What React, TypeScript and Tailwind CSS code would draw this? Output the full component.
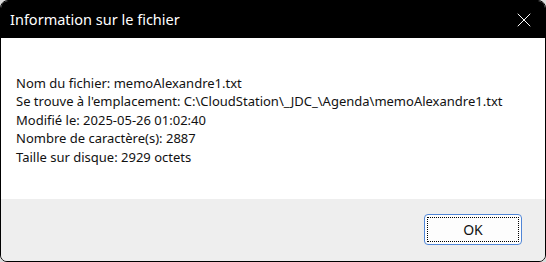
import { X } from "lucide-react";

const lines = [
  "Nom du fichier: memoAlexandre1.txt",
  "Se trouve à l'emplacement: C:\\CloudStation\\_JDC_\\Agenda\\memoAlexandre1.txt",
  "Modifié le: 2025-05-26 01:02:40",
  "Nombre de caractère(s): 2887",
  "Taille sur disque: 2929 octets",
];

export default function App() {
  return (
    <div className="h-[262px] w-[546px] bg-[#dcdcdc] font-['Noto_Sans',sans-serif]">
      <div className="flex h-full flex-col overflow-hidden rounded-t-[8px] rounded-b-[7px] border border-black">
        <div className="flex h-[37px] shrink-0 items-center justify-between bg-black pl-[9px] pr-[9px]">
          <span className="text-[14.5px] text-white">Information sur le fichier</span>
          <X className="h-[24px] w-[24px] text-white" strokeWidth={1} />
        </div>
        <div className="flex-1 bg-white pl-[15px] pt-[36px] text-[13px] leading-[18.4px] text-[#111]">
          {lines.map((line) => (
            <div key={line}>{line}</div>
          ))}
        </div>
        <div className="flex h-[62px] shrink-0 items-start justify-end bg-[#eeeeee] pr-[23px] pt-[15px]">
          <button className="flex h-[31px] w-[98px] items-center justify-center rounded-[4px] border border-[#4f85d6] bg-[#fdfdfd] p-[2px]">
            <span className="flex h-full w-full items-center justify-center border border-dotted border-black text-[14px] text-[#111]">
              OK
            </span>
          </button>
        </div>
      </div>
    </div>
  );
}
